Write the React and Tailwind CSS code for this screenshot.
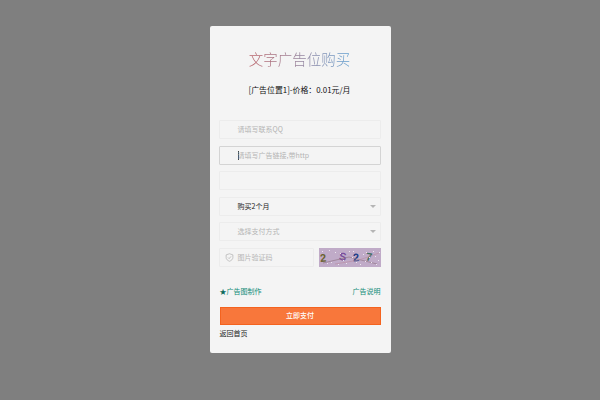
import React from "react";

const Field = ({ children, focused, arrow }) => (
  <div
    className={`flex h-[19px] items-center justify-between rounded-[1px] border pl-[18px] pr-[4px] text-[7px] leading-none ${
      focused ? "border-[#d4d4d4]" : "border-[#ececec]"
    }`}
  >
    {children}
    {arrow && (
      <span className="h-0 w-0 border-x-[3px] border-t-[3px] border-x-transparent border-t-[#b5b5b5]" />
    )}
  </div>
);

const noise = [
  [3, 3], [8, 15], [12, 14], [16, 4], [21, 5], [24, 12], [27, 15], [30, 3], [34, 3], [37, 14],
  [41, 16], [44, 6], [47, 4], [50, 9], [52, 14], [54, 3], [56, 8], [59, 12], [60, 4], [33, 9],
  [46, 13], [57, 16], [19, 16], [10, 2],
];

const Captcha = () => (
  <div className="relative flex h-[19px] w-[62px] items-center overflow-hidden bg-[#c0abc8] pl-[1px] font-['Liberation_Sans',sans-serif] text-[11px] font-bold leading-none">
    <span className="w-[19px] rotate-[-6deg] text-[#6b6330]">2</span>
    <span className="w-[14px] rotate-[10deg] text-[#7a4f9c]">S</span>
    <span className="w-[13px] rotate-[-4deg] text-[#1f3f86]">2</span>
    <span className="w-[10px] rotate-[8deg] text-[#3f6f62]">7</span>
    <svg className="absolute inset-0" width="62" height="19" viewBox="0 0 62 19">
      <path d="M4 15L30 9L58 16" stroke="#8c6f7d" strokeWidth="0.6" fill="none" />
      <path d="M16 16L40 12L60 5" stroke="#b98ba0" strokeWidth="0.6" fill="none" />
      <g fill="#ece6ee">
        {noise.map(([x, y]) => (
          <rect key={`${x}-${y}`} x={x} y={y} width="1" height="1" />
        ))}
      </g>
    </svg>
  </div>
);

export default function App() {
  return (
    <div className="flex h-[400px] w-[600px] justify-center bg-[#7f7f7f] pt-[26px] font-['Noto_Sans_CJK_SC','Noto_Sans',sans-serif]">
      <div className="h-[327px] w-[181px] rounded-[2px] bg-[#f4f4f4] pl-[9px] pr-[10px] pt-[23px]">
        <h1 className="mx-auto w-fit whitespace-nowrap bg-gradient-to-r from-[#b85f66] to-[#5b9ccf] bg-clip-text text-[14.5px] leading-[20px] font-light text-transparent">
          文字广告位购买
        </h1>
        <p className="mt-[15px] text-center text-[7.9px] leading-[12px] text-[#111]">
          [广告位置1]-价格：0.01元/月
        </p>

        <div className="mt-[24px] flex flex-col gap-[6.6px] text-[#b4b4b4]">
          <Field>请填写联系QQ</Field>
          <Field focused>
            <span className="flex items-center">
              <span className="mr-[-1px] h-[9px] w-[1px] bg-[#444]" />
              <span className="flex-1">请填写广告链接,带http</span>
            </span>
          </Field>
          <Field />
          <Field arrow>
            <span className="text-[#222]">购买2个月</span>
          </Field>
          <Field arrow>选择支付方式</Field>
          <div className="flex justify-between">
            <div className="flex h-[19px] w-[95px] items-center rounded-[1px] border border-[#ececec] pl-[5px] text-[7px] leading-none">
              <svg width="9" height="9" viewBox="0 0 24 24" fill="none" stroke="#b4b4b4" strokeWidth="2">
                <path d="M12 2l9 3v7c0 5-4 8-9 10-5-2-9-5-9-10V5z" />
                <path d="M8 12l3 3 5-6" />
              </svg>
              <span className="ml-[4px]">图片验证码</span>
            </div>
            <Captcha />
          </div>
        </div>

        <div className="ml-[1px] mt-[18px] flex justify-between text-[7px] leading-[12px] text-[#0f8a76]">
          <span>
            <span className="text-[#0b6b5c]">★</span>广告图制作
          </span>
          <span>广告说明</span>
        </div>

        <button className="ml-[1px] mt-[10px] block h-[18px] w-[161px] border border-[#f4631f] bg-[#f8773b] text-[7px] font-medium leading-none text-white">
          立即支付
        </button>
        <p className="ml-[1px] mt-[2px] text-[7px] leading-[12px] text-[#222]">返回首页</p>
      </div>
    </div>
  );
}
